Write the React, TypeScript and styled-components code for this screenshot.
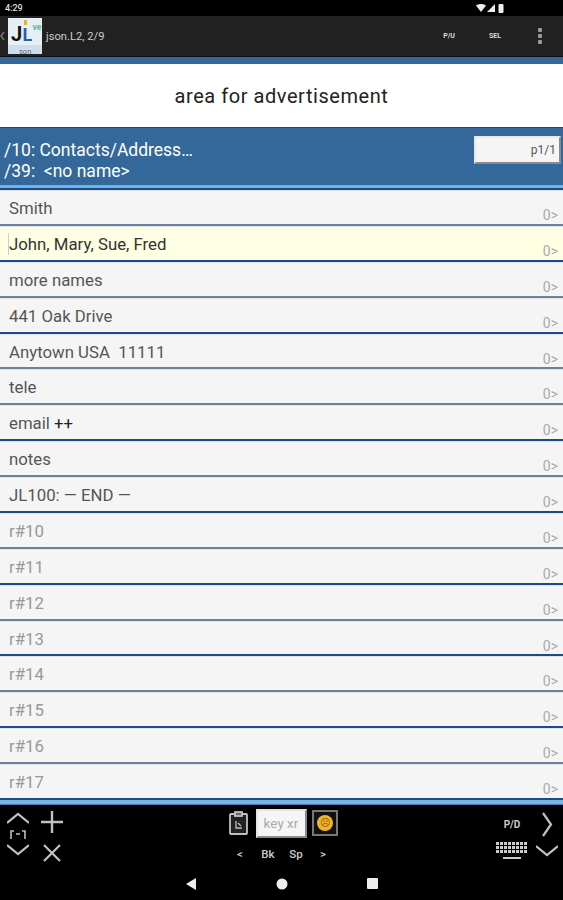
import React from 'react';
import styled, { createGlobalStyle } from 'styled-components';

const Global = createGlobalStyle`
  html, body { margin: 0; padding: 0; background: #000; }
  body { font-family: Roboto, "Liberation Sans", sans-serif; }
`;
const Page = styled.div`
  width: 563px; height: 900px; overflow: hidden; display: flex; flex-direction: column; background: #000;
`;
const StatusBar = styled.div`
  height: 16px; flex: none; background: #000; color: #ddd; display: flex; align-items: center; justify-content: space-between;
  padding: 0 58px 0 5px; font-size: 9px; font-weight: 500;
`;
const StatusIcons = styled.div`display: flex; align-items: center; gap: 1px;`;
const AppBar = styled.div`
  height: 41px; flex: none; box-sizing: border-box; background: #212121; display: flex; align-items: center; color: #ddd;
  border-bottom: 1px solid #111;
`;
const Back = styled.div`
  width: 8px; height: 100%; display: flex; align-items: center; color: #666; flex: none;
`;
const Logo = styled.div`
  width: 34px; height: 36px; flex: none; display: flex;
`;
const AppTitle = styled.div`
  font-size: 11.2px; margin-left: 4px; flex: 1; color: #ccc;
`;
const ActionLabel = styled.div<{ $w: number; $gap?: number }>`
  width: ${p => p.$w}px; margin-left: ${p => p.$gap ?? 0}px; font-size: 7px; font-weight: 700; color: #ddd; text-align: center; flex: none;
`;
const Kebab = styled.div`
  width: 46px; margin-left: 6px; flex: none; display: flex; justify-content: center;
`;
const BlueStrip = styled.div`
  height: 7px; background: #34689b; flex: none;
`;
const AdArea = styled.div`
  height: 63px; background: #fff; flex: none; display: flex; align-items: center; justify-content: center;
  color: #222; font-size: 20px; letter-spacing: 0.55px;
`;
const Header = styled.div`
  height: 58px; flex: none; background: #34689b; border-top: 1px solid #1d4a80; box-sizing: border-box;
  display: flex; justify-content: space-between; color: #fff;
`;
const HeaderText = styled.div`
  padding: 12px 0 0 4px; display: flex; flex-direction: column; gap: 1px;
`;
const HeaderLine = styled.div`font-size: 17.5px; line-height: 20px; white-space: pre;`;
const PageBox = styled.div`
  width: 87px; height: 28px; margin: 8px 2px 0 0; box-sizing: border-box; background: #f5f5f5;
  border: 2px solid; border-color: #e8e8e8 #8a8a8a #8a8a8a #e8e8e8; color: #555; font-size: 12px;
  display: flex; align-items: center; justify-content: flex-end; padding-right: 3px;
`;
const HeaderRule = styled.div`
  height: 5px; flex: none; box-sizing: border-box; background: #6fb4e6; border-bottom: 2px solid #1d4a80;
`;
const List = styled.div`
  flex: none; display: flex; flex-direction: column; background: #f5f5f5;
`;
const Row = styled.div<{ $sel?: boolean; $dark?: boolean }>`
  height: 35.875px; flex: none; box-sizing: border-box; position: relative;
  background: ${p => (p.$sel ? '#ffffe4' : '#f5f5f5')};
  border-bottom: 2px solid ${p => (p.$dark ? '#1f4a8a' : '#6d8299')};
  border-top: 1px solid #dfe4ea;
  display: flex; align-items: flex-start; justify-content: space-between; padding: 7px 5px 0 9px;
`;
const RowText = styled.div<{ $dim?: boolean; $sel?: boolean }>`
  font-size: 16.8px; line-height: 20px; white-space: pre;
  color: ${p => (p.$dim ? '#999' : p.$sel ? '#333' : '#555')};
`;
const Caret = styled.span`
  position: absolute; left: 8px; top: 6px; width: 1px; height: 22px; background: #ccc;
`;
const Dark = styled.span`color: #222;`;
const Count = styled.div`
  font-size: 14px; line-height: 16px; color: #aaa; margin-top: 9px;
`;
const FooterRule = styled.div`
  height: 5px; flex: none; box-sizing: border-box; background: #7cb2e0; border-bottom: 1px solid #3f7bb4;
`;
const Toolbar = styled.div`
  height: 73px; flex: none; background: #000; display: flex; justify-content: space-between;
`;
const LeftTools = styled.div`
  display: flex; padding-left: 6px; gap: 11px; width: 70px;
`;
const ArrowColumn = styled.div`
  width: 24px; padding-top: 7px; display: flex; flex-direction: column; align-items: center; gap: 5px;
`;
const EditColumn = styled.div`
  width: 22px; padding-top: 6px; display: flex; flex-direction: column; align-items: center; gap: 11px;
`;
const Center = styled.div`
  display: flex; flex-direction: column; align-items: center; margin-left: 2px; padding-top: 4px;
`;
const CenterTop = styled.div`display: flex; align-items: center; gap: 8px;`;
const KeyBox = styled.div`
  width: 51px; height: 29px; box-sizing: border-box; background: #f5f5f5; color: #aaa; font-size: 13.5px;
  border: 2px solid; border-color: #e6e6e6 #8a8a8a #8a8a8a #e6e6e6; display: flex; align-items: center; justify-content: center;
`;
const Emoji = styled.div`
  width: 26px; height: 26px; margin-left: -3px; box-sizing: border-box; border: 2px solid #777; background: #111;
  display: flex; align-items: center; justify-content: center;
`;
const Face = styled.div`
  width: 16px; height: 16px; border-radius: 50%; background: #f0b429; color: #8a5a10; font-size: 10px; line-height: 16px; text-align: center;
`;
const KeyRow = styled.div`
  display: flex; margin-top: 9px; margin-right: 4px; color: #ccc; font-size: 11.5px; font-weight: 500;
`;
const KeyLabel = styled.div<{ $w: number }>`
  width: ${p => p.$w}px; text-align: center;
`;
const RightTools = styled.div`
  display: grid; grid-template-columns: 48px 22px; grid-template-rows: 25px 18px; row-gap: 5px;
  padding-top: 7px; width: 75px; box-sizing: border-box; align-content: start;
`;
const PD = styled.div`
  color: #ccc; font-size: 10px; font-weight: 700; display: flex; align-items: center; justify-content: center;
`;
const Cell = styled.div`display: flex; align-items: center; justify-content: center;`;
const NavBar = styled.div`
  height: 22px; flex: none; background: #000; display: flex; align-items: flex-start; justify-content: center; gap: 79px;
`;

const S = '#c0c0c0';
const Chevron = ({ d, w = 22, h = 12 }: { d: string; w?: number; h?: number }) => (
  <svg width={w} height={h} viewBox={`0 0 ${w} ${h}`} fill="none" stroke={S} strokeWidth="2.2"><path d={d} /></svg>
);

const rows: { t: React.ReactNode; dim?: boolean; sel?: boolean; dark?: boolean }[] = [
  { t: 'Smith' },
  { t: 'John, Mary, Sue, Fred', sel: true, dark: true },
  { t: 'more names' },
  { t: '441 Oak Drive', dark: true },
  { t: 'Anytown USA  11111' },
  { t: 'tele' },
  { t: <>email <Dark>++</Dark></>, dark: true },
  { t: 'notes' },
  { t: 'JL100: — END —', dark: true },
  { t: 'r#10', dim: true },
  { t: 'r#11', dim: true, dark: true },
  { t: 'r#12', dim: true },
  { t: 'r#13', dim: true, dark: true },
  { t: 'r#14', dim: true },
  { t: 'r#15', dim: true, dark: true },
  { t: 'r#16', dim: true },
  { t: 'r#17', dim: true, dark: true },
];

export default function App() {
  return (
    <Page>
      <Global />
      <StatusBar>
        <span>4:29</span>
        <StatusIcons>
          <svg width="10" height="8" viewBox="0 0 10 8"><path d="M0 1.5C3-.5 7-.5 10 1.5L5 8z" fill="#eee" /></svg>
          <svg width="8" height="8" viewBox="0 0 8 8"><path d="M8 0v8H0z" fill="#eee" /></svg>
          <svg width="7" height="10" viewBox="0 0 6 10" style={{ marginLeft: 2 }}><rect y="1" width="5" height="9" rx="1" fill="#eee" /></svg>
        </StatusIcons>
      </StatusBar>
      <AppBar>
        <Back><svg width="5" height="10" viewBox="0 0 5 10" fill="none" stroke="#777" strokeWidth="1.5"><path d="M4 1L1 5l3 4" /></svg></Back>
        <Logo>
          <svg width="34" height="36" viewBox="0 0 34 36">
            <rect width="34" height="36" fill="#e6eff6" />
            <rect x="0" y="27" width="34" height="9" fill="#cddfee" />
            <text x="3" y="23" fontSize="20" fontWeight="700" fill="#111" fontFamily="Roboto, sans-serif">J</text>
            <text x="14.5" y="23" fontSize="18" fontWeight="700" fill="#2a5fa8" fontFamily="Roboto, sans-serif">L</text>
            <rect x="16" y="2" width="3" height="5" fill="#e8b020" />
            <text x="24.5" y="12" fontSize="8.5" fontWeight="700" fill="#58b8a0" fontFamily="Roboto, sans-serif">ve</text>
            <text x="11" y="35.5" fontSize="7.5" fill="#667" fontFamily="Roboto, sans-serif">son</text>
          </svg>
        </Logo>
        <AppTitle>json.L2, 2/9</AppTitle>
        <ActionLabel $w={20}>P/U</ActionLabel>
        <ActionLabel $w={32} $gap={20}>SEL</ActionLabel>
        <Kebab>
          <svg width="4" height="16" viewBox="0 0 4 16" fill="#999"><rect width="4" height="4" rx="1" /><rect y="6" width="4" height="4" rx="1" /><rect y="12" width="4" height="4" rx="1" /></svg>
        </Kebab>
      </AppBar>
      <BlueStrip />
      <AdArea>area for advertisement</AdArea>
      <Header>
        <HeaderText>
          <HeaderLine>/10: Contacts/Address…</HeaderLine>
          <HeaderLine>/39:  &lt;no name&gt;</HeaderLine>
        </HeaderText>
        <PageBox>p1/1</PageBox>
      </Header>
      <HeaderRule />
      <List>
        {rows.map((r, i) => (
          <Row key={i} $sel={r.sel} $dark={r.dark}>
            {r.sel && <Caret />}
            <RowText $dim={r.dim} $sel={r.sel}>{r.t}</RowText>
            <Count>0&gt;</Count>
          </Row>
        ))}
      </List>
      <FooterRule />
      <Toolbar>
        <LeftTools>
          <ArrowColumn>
            <Chevron d="M0 11L11 2l11 9" />
            <svg width="18" height="10" viewBox="0 0 18 10" fill="none" stroke={S} strokeWidth="1.6"><path d="M2 10V2h3M7 5h4M16 10V2h-3" /></svg>
            <Chevron d="M0 1l11 9 11-9" />
          </ArrowColumn>
          <EditColumn>
            <svg width="22" height="22" viewBox="0 0 22 22" stroke={S} strokeWidth="2.4"><path d="M11 0v22M0 11h22" /></svg>
            <svg width="18" height="18" viewBox="0 0 18 18" stroke={S} strokeWidth="2.2"><path d="M1 1l16 16M17 1L1 17" /></svg>
          </EditColumn>
        </LeftTools>
        <Center>
          <CenterTop>
            <svg width="19" height="24" viewBox="0 0 19 24" fill="none" stroke={S} strokeWidth="1.8"><rect x="1" y="3" width="17" height="20" rx="1" fill="#222" /><rect x="6" y="1" width="7" height="4" fill="#666" /><path d="M7 10v7h6M9 12l3 3" strokeWidth="1.3" /></svg>
            <KeyBox>key xr</KeyBox>
            <Emoji><Face>☹</Face></Emoji>
          </CenterTop>
          <KeyRow>
            <KeyLabel $w={28}>&lt;</KeyLabel>
            <KeyLabel $w={28}>Bk</KeyLabel>
            <KeyLabel $w={28}>Sp</KeyLabel>
            <KeyLabel $w={26}>&gt;</KeyLabel>
          </KeyRow>
        </Center>
        <RightTools>
          <PD>P/D</PD>
          <Cell><svg width="12" height="25" viewBox="0 0 12 25" fill="none" stroke={S} strokeWidth="2.2"><path d="M2 1l8 11.5L2 24" /></svg></Cell>
          <Cell>
            <svg width="32" height="18" viewBox="0 0 32 18" fill="#ccc">
              {[0, 1, 2].map(r => Array.from({ length: 8 }, (_, c) => <rect key={`${r}-${c}`} x={c * 4} y={r * 4} width="3" height="3" />))}
              <rect x="7" y="15" width="18" height="2" />
            </svg>
          </Cell>
          <Cell><Chevron d="M0 1l11 9 11-9" /></Cell>
        </RightTools>
      </Toolbar>
      <NavBar>
        <svg width="12" height="12" viewBox="0 0 12 12" fill="#eee"><path d="M11 0v12L1 6z" /></svg>
        <svg width="12" height="12" viewBox="0 0 12 12" fill="#eee"><circle cx="6" cy="6" r="5.5" /></svg>
        <svg width="11" height="11" viewBox="0 0 11 11" fill="#eee"><rect width="11" height="11" rx="1" /></svg>
      </NavBar>
    </Page>
  );
}
